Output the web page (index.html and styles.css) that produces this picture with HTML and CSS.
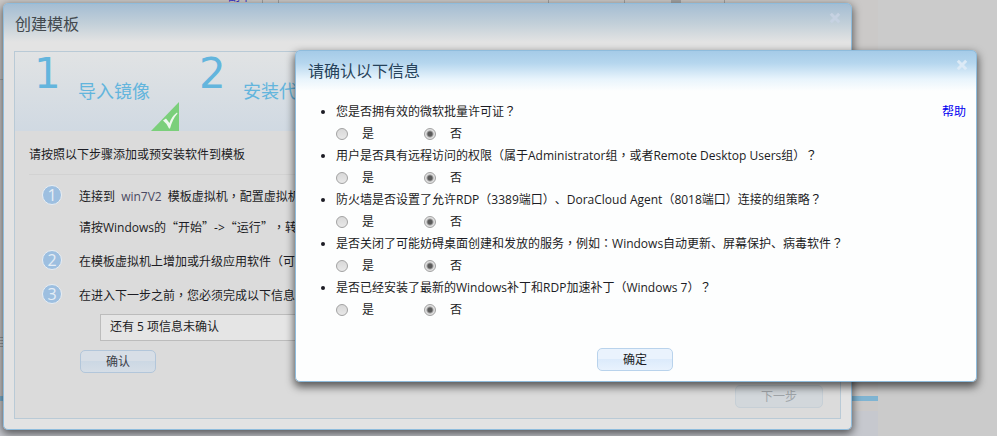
FILE: index.html
```html
<!DOCTYPE html>
<html lang="zh-CN">
<head>
<meta charset="utf-8">
<title>创建模板</title>
<link rel="stylesheet" href="styles.css">
</head>
<body>
<div class="page">
  <div class="page-top"><a class="page-link" href="#">副本</a><i class="tick tick-a"></i><i class="tick tick-b"></i><i class="tick tick-c"></i><i class="tick tick-d"></i><i class="thumb"></i><i class="tick tick-e"></i></div>
  <div class="page-rule"></div>
  <div class="page-grip"></div>
  <div class="page-bar"></div>
  <div class="page-foot"></div>
</div>

<section class="dialog wizard" aria-labelledby="wizard-title">
  <header class="dialog-head">
    <h1 id="wizard-title">创建模板</h1>
    <button class="close" aria-label="关闭"><svg viewBox="0 0 10 10"><path d="M1.5 1.5 8.5 8.5M8.5 1.5 1.5 8.5"/></svg></button>
  </header>
  <div class="panel">
    <ol class="steps">
      <li class="step"><span class="num">1</span><span class="name">导入镜像</span>
        <svg class="done" viewBox="0 0 28 29"><path class="corner" d="M28 0V29H0Z"/><path class="check" d="M12 18.5 15 16.5 18.5 21Q20.5 14.5 26 10.5L26.5 11.5Q21.5 17 19 26.5H18Q15.5 21 12 18.5Z"/></svg></li>
      <li class="step"><span class="num">2</span><span class="name">安装代</span></li>
    </ol>
    <p class="intro">请按照以下步骤添加或预安装软件到模板</p>
    <ol class="tasks">
      <li><span class="badge">1</span><div><p>连接到&nbsp;<span class="vm">win7V2</span>&nbsp;模板虚拟机<span class="mid" lang="zh-TW">，</span>配置虚拟机</p><p>请按Windows的<span class="wide">“</span>开始<span class="wide">”</span>-&gt;<span class="wide">“</span>运行<span class="wide">”</span><span class="mid" lang="zh-TW">，</span>转</p></div></li>
      <li><span class="badge">2</span><div><p>在模板虚拟机上增加或升级应用软件（可</p></div></li>
      <li><span class="badge">3</span><div><p>在进入下一步之前<span class="mid" lang="zh-TW">，</span>您必须完成以下信息</p></div></li>
    </ol>
    <div class="status">还有 5 项信息未确认</div>
    <button class="btn confirm">确认</button>
    <div class="next-row"><button class="btn next" disabled>下一步</button></div>
  </div>
</section>

<section class="dialog ask" role="dialog" aria-labelledby="ask-title">
  <header class="dialog-head">
    <h2 id="ask-title">请确认以下信息</h2>
    <button class="close" aria-label="关闭"><svg viewBox="0 0 10 10"><path d="M1.5 1.5 8.5 8.5M8.5 1.5 1.5 8.5"/></svg></button>
  </header>
  <form class="ask-body">
    <ul class="questions">
      <li><p>您是否拥有效的微软批量许可证<span class="mid" lang="zh-TW">？</span></p><div class="choices"><label><input type="radio" name="q1">是</label><label><input type="radio" name="q1" checked>否</label></div></li>
      <li><p>用户是否具有远程访问的权限（属于Administrator组<span class="mid" lang="zh-TW">，</span>或者Remote Desktop Users组）<span class="mid" lang="zh-TW">？</span></p><div class="choices"><label><input type="radio" name="q2">是</label><label><input type="radio" name="q2" checked>否</label></div></li>
      <li><p>防火墙是否设置了允许RDP（3389端口）、DoraCloud Agent（8018端口）连接的组策略<span class="mid" lang="zh-TW">？</span></p><div class="choices"><label><input type="radio" name="q3">是</label><label><input type="radio" name="q3" checked>否</label></div></li>
      <li><p>是否关闭了可能妨碍桌面创建和发放的服务<span class="mid" lang="zh-TW">，</span>例如<span class="mid" lang="zh-TW">：</span>Windows自动更新、屏幕保护、病毒软件<span class="mid" lang="zh-TW">？</span></p><div class="choices"><label><input type="radio" name="q4">是</label><label><input type="radio" name="q4" checked>否</label></div></li>
      <li><p>是否已经安装了最新的Windows补丁和RDP加速补丁（Windows 7）<span class="mid" lang="zh-TW">？</span></p><div class="choices"><label><input type="radio" name="q5">是</label><label><input type="radio" name="q5" checked>否</label></div></li>
    </ul>
    <a class="help" href="#">帮助</a>
  </form>
  <footer class="ask-foot"><button class="btn">确定</button></footer>
</section>
</body>
</html>
```

FILE: styles.css
```css
* { box-sizing: border-box; }
body {
  margin: 0;
  min-height: 100vh;
  overflow: hidden;
  background: #cbcbcb;
  color: #1c1c24;
  font: 12px/22px "Open Sans", "Noto Sans CJK SC", sans-serif;
  text-spacing-trim: space-all;
}
h1, h2, p, ol, ul { margin: 0; padding: 0; }
ol { list-style: none; }
button { font: inherit; }

/* punctuation centred in its em box, and full-width quotes */
.mid { font-family: "Noto Sans CJK TC", sans-serif; line-height: 1; }
.wide { font-family: "Noto Sans CJK SC", sans-serif; line-height: 1; }

/* page behind the dialogs */
.page {
  display: flex;
  flex-direction: column;
  height: 100vh;
  margin-right: 119px;
  background: #cbc9c8;
}
.page-top { position: relative; height: 79px; overflow: hidden; }
.page-link { position: absolute; left: 228px; top: -12px; line-height: 18px; color: #4038c8; text-decoration: none; }
.tick { position: absolute; top: 0; width: 1px; height: 10px; background: #a0a0a0; }
.tick-a { left: 262px; }
.tick-b { left: 278px; }
.tick-c { left: 548px; }
.tick-d { left: 624px; }
.tick-e { left: 724px; }
.thumb { position: absolute; left: 671px; top: 0; width: 10px; height: 10px; background: #a4a4a4; }
.page-rule { height: 1px; background: #aaa; }
.page-grip {
  height: 12px;
  margin-top: 257px;
  background: repeating-linear-gradient(#999 0 1px, #ccc 1px 3px);
}
.page-bar { height: 5px; margin-top: 47px; background: #7fb4d2; }
.page-foot { flex: 1; margin-top: 10px; background: #c6c8ce; }

/* dialogs */
.dialog {
  position: absolute;
  border: 1px solid #8fbcdc;
  border-radius: 5px;
}
.dialog-head {
  display: flex;
  justify-content: space-between;
  align-items: flex-start;
  height: 40px;
  padding: 8px 8px 0 12px;
}
h1, h2 { font-size: 16px; font-weight: 400; line-height: 24px; }
.close {
  width: 12px;
  height: 12px;
  padding: 0;
  border: 0;
  background: none;
}
.close svg { display: block; width: 12px; height: 12px; fill: none; stroke: #dceaf6; stroke-width: 2.5; }

.btn {
  display: block;
  width: 76px;
  height: 23px;
  padding: 0;
  border: 1px solid #b9d3ec;
  border-radius: 5px;
  background: linear-gradient(#eaf3fd 50%, #dcebfb 50%, #e8f2fd);
  color: #1c1c24;
  line-height: 20px;
}

/* wizard */
.wizard {
  top: 3px;
  left: 3px;
  right: 145px;
  padding: 0 10px 10px;
  background: linear-gradient(#a4bdd3, #c3d0d9 20px, #e3e3e3 38px);
  box-shadow: 0 3px 8px 1px rgba(0, 0, 0, .55);
}
.wizard .dialog-head { height: 47px; padding: 8px 8px 0 1px; }
.wizard h1 { color: #43494e; }
.wizard .close { margin-right: -8px; }
.wizard .close svg { stroke: #c6d2e2; }
.panel { border: 1px solid #b9cad6; background: #dbdbdb; }
.steps { display: flex; height: 79px; background: linear-gradient(#e1e3e4, #d0d9e2); }
.step {
  position: relative;
  display: flex;
  width: 165px;
  padding-left: 19px;
  color: #63b5dd;
}
.num { width: 44px; font: 42px/44px "DejaVu Sans", sans-serif; }
.name { font-size: 18px; line-height: 24px; padding-top: 27px; }
.done { position: absolute; right: 1px; bottom: 0; width: 28px; height: 29px; }
.corner { fill: #7bcf7b; }
.check { fill: #eef8ee; }
.intro {
  margin: 0 14px;
  padding: 13px 0 8px;
  border-bottom: 1px solid #d2d2d2;
}
.tasks { padding: 6px 14px 0 27px; }
.tasks li { display: flex; gap: 17px; margin-bottom: 3px; line-height: 31px; }
.tasks p { white-space: nowrap; }
.vm { margin: 0 3px; color: #4a4a62; }
.badge {
  flex: none;
  width: 20px;
  height: 20px;
  margin-top: 4px;
  border: 1px solid #e8eef4;
  border-radius: 50%;
  background: #9dbfe0;
  color: #e6eef6;
  font-size: 16px;
  line-height: 18px;
  text-align: center;
}
.status {
  height: 27px;
  margin: 0 15px 9px 85px;
  padding-left: 9px;
  border: 1px solid #bcbcbc;
  background: #e5e5e5;
  line-height: 24px;
}
.confirm {
  margin-left: 65px;
  border-color: #b2c6da;
  background: linear-gradient(#d7dee6 50%, #ccd8e4 50%, #d5dde6);
  color: #3c4048;
}
.next-row { display: flex; justify-content: flex-end; padding: 12px 17px 10px; }
.next {
  width: 88px;
  border-color: #c6cfd6;
  background: #d2d7db;
  color: #a0a5a9;
}

/* confirmation */
.ask {
  top: 50px;
  left: 295px;
  right: 20px;
  background: linear-gradient(#a5cbe8, #b5d6ee 12px, #e8f4fc 28px, #fdfefe 40px);
  box-shadow: 0 4px 8px 1px rgba(0, 0, 0, .6);
}
h2 { color: #26425a; }
.ask-body { display: flex; justify-content: space-between; padding: 10px 10px 0 40px; }
.questions p { height: 22px; white-space: nowrap; line-height: 22px; }
.choices { display: flex; height: 22px; }
.choices label { display: flex; align-items: center; width: 88px; }
.choices input {
  appearance: none;
  width: 12px;
  height: 12px;
  margin: 0 14px 0 0;
  border: 1px solid #a2a2a2;
  border-radius: 50%;
  background: linear-gradient(#d8d8d8, #e8e8e8);
}
.choices input:checked { background: radial-gradient(circle, #5a5a5a 0 2px, #e0e0e0 4px); }
.help { color: #0000f0; text-decoration: none; }
.ask-foot { display: flex; justify-content: center; padding: 27px 2px 10px 0; }
```
